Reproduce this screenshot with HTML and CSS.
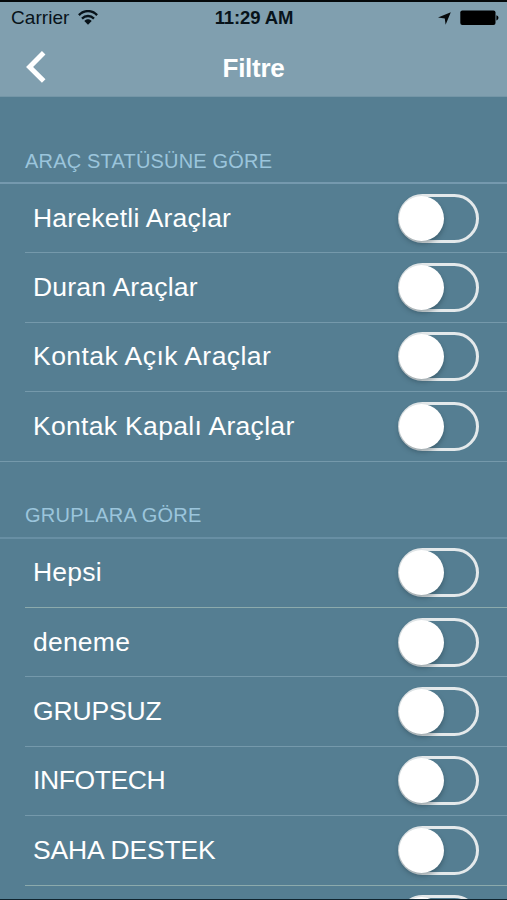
FILE: index.html
```html
<!DOCTYPE html>
<html lang="tr">
<head>
<meta charset="utf-8">
<title>Filtre</title>
<link rel="stylesheet" href="styles.css">
</head>
<body>
<div class="screen">
  <header class="header">
    <div class="status">
      <div class="carrier"><span>Carrier</span>
        <svg class="wifi" width="20" height="15" viewBox="0 0 20 15" fill="none" stroke="#08131a" stroke-width="2.3"><path d="M.9 5.1C6-.3 14-.3 19.1 5.1M4 8.6c3.4-3.5 8.6-3.5 12 0"/><path d="M6.3 11c2-2.2 5.4-2.2 7.4 0L10 14.8z" fill="#08131a" stroke="none"/></svg>
      </div>
      <time class="time">11:29 AM</time>
      <div class="indicators">
        <svg width="13" height="13" viewBox="0 0 13 13"><path d="M12.8.2 7.6 12.8 6.8 6.5 0 5.4z" fill="#06090b"/></svg>
        <svg width="39" height="16" viewBox="0 0 39 16"><rect x=".3" y=".4" width="35.2" height="14.6" rx="2" fill="#000"/><path d="M36.4 5.2c2.7.8 2.7 4.4 0 5.2z" fill="#000"/></svg>
      </div>
    </div>
    <div class="nav">
      <svg class="back" width="20" height="32" viewBox="0 0 20 32" fill="none" stroke="#fff" stroke-width="5"><path d="M17.7 1.8 3.6 15.9 17.7 30"/></svg>
      <h1 class="title">Filtre</h1>
    </div>
  </header>
  <main>
    <h2 class="heading first">ARAÇ STATÜSÜNE GÖRE</h2>
    <ul class="list">
      <li class="row"><span>Hareketli Araçlar</span><i class="toggle"></i></li>
      <li class="row"><span>Duran Araçlar</span><i class="toggle"></i></li>
      <li class="row"><span class="wide">Kontak Açık Araçlar</span><i class="toggle"></i></li>
      <li class="row last"><span class="medium">Kontak Kapalı Araçlar</span><i class="toggle"></i></li>
    </ul>
    <h2 class="heading second">GRUPLARA GÖRE</h2>
    <ul class="list">
      <li class="row bright"><span>Hepsi</span><i class="toggle"></i></li>
      <li class="row"><span>deneme</span><i class="toggle"></i></li>
      <li class="row"><span class="caps">GRUPSUZ</span><i class="toggle"></i></li>
      <li class="row"><span class="caps tight">INFOTECH</span><i class="toggle"></i></li>
      <li class="row bright"><span class="caps">SAHA DESTEK</span><i class="toggle"></i></li>
      <li class="row"><span></span><i class="toggle"></i></li>
    </ul>
  </main>
</div>
</body>
</html>
```
FILE: styles.css
```css
* { box-sizing: border-box; }
body { margin: 0; background: #557e92; overflow: hidden; }
.screen {
  width: 507px;
  height: 900px;
  overflow: hidden;
  background: #557e92;
  border-top: 2px solid #05090b;
  border-bottom: 1px solid #10242e;
  font-family: "Liberation Sans", Arial, sans-serif;
  color: #fff;
}
.header { height: 95px; background: #809faf; border-bottom: 1px solid #7496a7; }
.status {
  display: grid;
  grid-template-columns: 1fr auto 1fr;
  align-items: center;
  height: 32px;
  padding: 0 8px 0 11px;
  color: #08131a;
}
.carrier { display: flex; align-items: center; gap: 9px; font-size: 19px; letter-spacing: .05px; }
.wifi { margin-bottom: 2px; }
.time { font-size: 18.5px; font-weight: 700; letter-spacing: -.1px; margin-right: 2px; }
.indicators { display: flex; align-items: center; justify-content: flex-end; gap: 9px; }
.nav {
  display: grid;
  grid-template-columns: 1fr auto 1fr;
  align-items: center;
  height: 60px;
  padding: 6px 0 0;
}
.back { margin-left: 26px; }
.title { grid-column: 2; margin: 2px 0 0; font-size: 26px; line-height: 30px; font-weight: 700; letter-spacing: -.3px; }
.heading {
  margin: 0;
  padding-left: 25px;
  display: flex;
  align-items: flex-end;
  font-size: 20px;
  line-height: 24px;
  font-weight: 400;
  letter-spacing: .18px;
  color: #9bc5dc;
}
.first { height: 87px; padding-bottom: 9px; border-bottom: 2px solid #7599ae; }
.second { height: 77px; padding-bottom: 10px; border-bottom: 2px solid #688fa4; letter-spacing: .25px; }
.list { margin: 0; padding: 0; list-style: none; }
.row {
  display: flex;
  align-items: center;
  justify-content: space-between;
  height: 69.4px;
  margin-left: 25px;
  padding: 0 28px 0 8px;
  border-bottom: 1px solid #7599ab;
  font-size: 26.5px;
  letter-spacing: .22px;
}
.wide { letter-spacing: .45px; }
.medium { letter-spacing: .32px; }
.caps { letter-spacing: -.13px; }
.tight { letter-spacing: -.4px; }
.bright { border-bottom-color: #8caaac; }
.last { margin-left: 0; padding-left: 33px; }
.toggle {
  width: 81px;
  height: 49px;
  border: 3px solid #e4e9eb;
  border-radius: 25px;
}
.toggle::before {
  content: "";
  display: block;
  width: 45px;
  height: 45px;
  margin: -1px 0 0 -2px;
  border-radius: 50%;
  background: #fff;
  box-shadow: 0 3px 5px rgba(20, 40, 50, .35);
}
```
